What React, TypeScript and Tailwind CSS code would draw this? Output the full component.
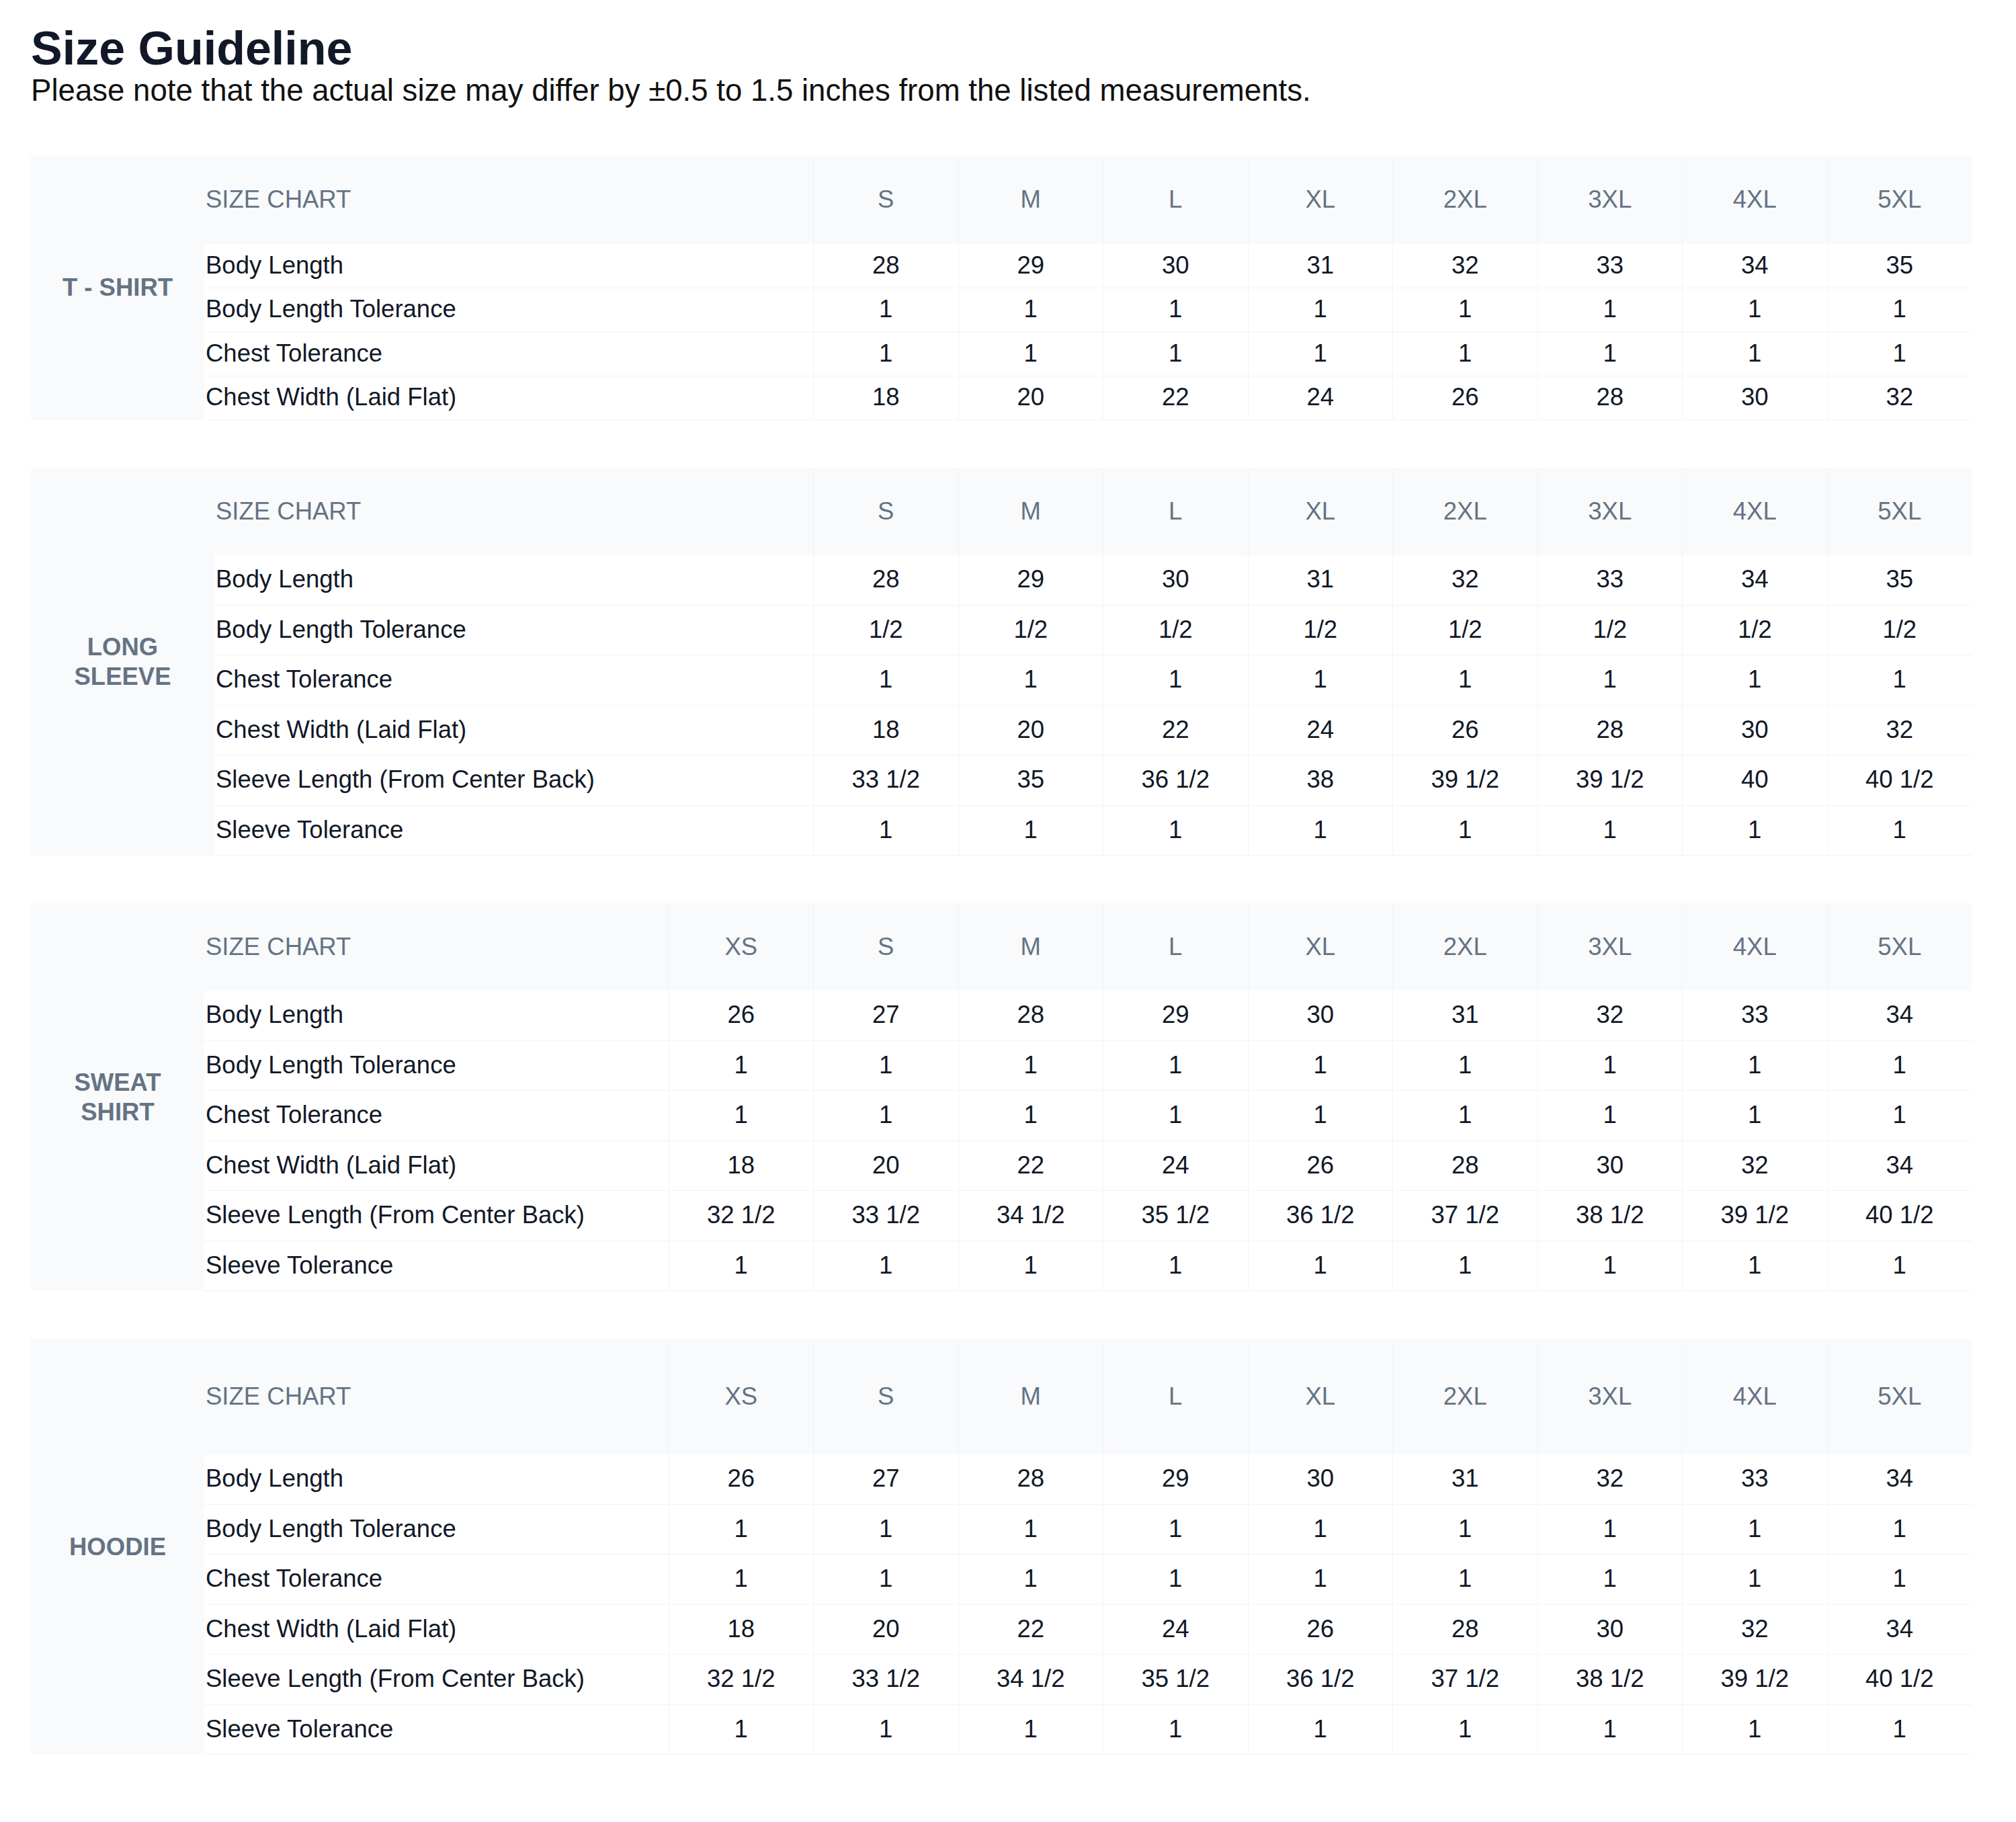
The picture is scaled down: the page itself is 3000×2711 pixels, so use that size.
const SIZES_8 = ["S", "M", "L", "XL", "2XL", "3XL", "4XL", "5XL"];
const SIZES_9 = ["XS", ...SIZES_8];

const ones = (n: number) => Array(n).fill("1");

interface Chart {
  name: string;
  grid: string;
  sizes: string[];
  rows: { label: string; values: string[] }[];
}

const charts: Chart[] = [
  {
    name: "T - SHIRT",
    grid: "grid grid-cols-[258px_906px_repeat(8,215.5px)] grid-rows-[132px_repeat(4,65.5px)]",
    sizes: SIZES_8,
    rows: [
      { label: "Body Length", values: ["28", "29", "30", "31", "32", "33", "34", "35"] },
      { label: "Body Length Tolerance", values: ones(8) },
      { label: "Chest Tolerance", values: ones(8) },
      { label: "Chest Width (Laid Flat)", values: ["18", "20", "22", "24", "26", "28", "30", "32"] },
    ],
  },
  {
    name: "LONG SLEEVE",
    grid: "grid grid-cols-[273px_891px_repeat(8,215.5px)] grid-rows-[130px_repeat(6,74.5px)]",
    sizes: SIZES_8,
    rows: [
      { label: "Body Length", values: ["28", "29", "30", "31", "32", "33", "34", "35"] },
      { label: "Body Length Tolerance", values: Array(8).fill("1/2") },
      { label: "Chest Tolerance", values: ones(8) },
      { label: "Chest Width (Laid Flat)", values: ["18", "20", "22", "24", "26", "28", "30", "32"] },
      {
        label: "Sleeve Length (From Center Back)",
        values: ["33 1/2", "35", "36 1/2", "38", "39 1/2", "39 1/2", "40", "40 1/2"],
      },
      { label: "Sleeve Tolerance", values: ones(8) },
    ],
  },
  {
    name: "SWEAT SHIRT",
    grid: "grid grid-cols-[258px_690.5px_repeat(9,215.5px)] grid-rows-[130px_repeat(6,74.5px)]",
    sizes: SIZES_9,
    rows: [
      { label: "Body Length", values: ["26", "27", "28", "29", "30", "31", "32", "33", "34"] },
      { label: "Body Length Tolerance", values: ones(9) },
      { label: "Chest Tolerance", values: ones(9) },
      { label: "Chest Width (Laid Flat)", values: ["18", "20", "22", "24", "26", "28", "30", "32", "34"] },
      {
        label: "Sleeve Length (From Center Back)",
        values: ["32 1/2", "33 1/2", "34 1/2", "35 1/2", "36 1/2", "37 1/2", "38 1/2", "39 1/2", "40 1/2"],
      },
      { label: "Sleeve Tolerance", values: ones(9) },
    ],
  },
  {
    name: "HOODIE",
    grid: "grid grid-cols-[258px_690.5px_repeat(9,215.5px)] grid-rows-[172px_repeat(6,74.5px)]",
    sizes: SIZES_9,
    rows: [
      { label: "Body Length", values: ["26", "27", "28", "29", "30", "31", "32", "33", "34"] },
      { label: "Body Length Tolerance", values: ones(9) },
      { label: "Chest Tolerance", values: ones(9) },
      { label: "Chest Width (Laid Flat)", values: ["18", "20", "22", "24", "26", "28", "30", "32", "34"] },
      {
        label: "Sleeve Length (From Center Back)",
        values: ["32 1/2", "33 1/2", "34 1/2", "35 1/2", "36 1/2", "37 1/2", "38 1/2", "39 1/2", "40 1/2"],
      },
      { label: "Sleeve Tolerance", values: ones(9) },
    ],
  },
];

const SizeTable = ({ chart }: { chart: Chart }) => {
  return (
    <div className={`${chart.grid} w-[2888px] text-[36.5px]`}>
      <div className="row-span-full flex items-center justify-center bg-[#f8fafc] px-[20px] text-center font-bold leading-[44px] text-[#657383]">
        {chart.name}
      </div>
      <div className="flex items-center bg-[#f8fafc] pl-[2px] text-[#657383]">SIZE CHART</div>
      {chart.sizes.map((size) => (
        <div key={size} className="flex items-center justify-center border-l border-[#f1f3f6] bg-[#f8fafc] text-[#657383]">
          {size}
        </div>
      ))}
      {chart.rows.map((row) => (
        <div key={row.label} className="contents">
          <div className="flex items-center border-b border-[#f1f3f6] pl-[2px] text-[#111827]">{row.label}</div>
          {row.values.map((v, i) => (
            <div
              key={i}
              className="flex items-center justify-center border-b border-l border-[#f1f3f6] text-[#111827]"
            >
              {v}
            </div>
          ))}
        </div>
      ))}
    </div>
  );
};

export default function App() {
  return (
    <div className="min-h-[2711px] w-[3000px] bg-white pl-[46px] pt-[34px] font-['Liberation_Sans',Arial,sans-serif]">
      <h1 className="text-[70px] font-bold leading-[76px] text-[#111827]">Size Guideline</h1>
      <p className="text-[45.6px] leading-[50px] text-[#111111]">
        Please note that the actual size may differ by ±0.5 to 1.5 inches from the listed measurements.
      </p>
      <div className="mt-[71px] flex flex-col gap-[71px]">
        {charts.map((chart) => (
          <SizeTable key={chart.name} chart={chart} />
        ))}
      </div>
    </div>
  );
}
